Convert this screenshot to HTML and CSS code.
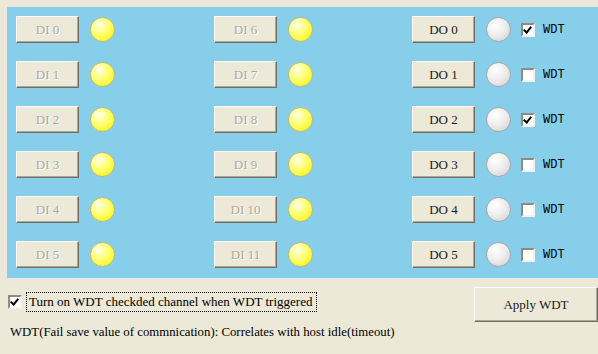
FILE: index.html
```html
<!DOCTYPE html>
<html lang="en">
<head>
  <meta charset="UTF-8">
  <title>DIO WDT</title>
  <link rel="stylesheet" href="styles.css">
</head>
<body>

<div class="panel">
  <div class="col">
    <div class="ch"><span class="btn off">DI 0</span><span class="led yellow"></span></div>
    <div class="ch"><span class="btn off">DI 1</span><span class="led yellow"></span></div>
    <div class="ch"><span class="btn off">DI 2</span><span class="led yellow"></span></div>
    <div class="ch"><span class="btn off">DI 3</span><span class="led yellow"></span></div>
    <div class="ch"><span class="btn off">DI 4</span><span class="led yellow"></span></div>
    <div class="ch"><span class="btn off">DI 5</span><span class="led yellow"></span></div>
  </div>
  <div class="col">
    <div class="ch"><span class="btn off">DI 6</span><span class="led yellow"></span></div>
    <div class="ch"><span class="btn off">DI 7</span><span class="led yellow"></span></div>
    <div class="ch"><span class="btn off">DI 8</span><span class="led yellow"></span></div>
    <div class="ch"><span class="btn off">DI 9</span><span class="led yellow"></span></div>
    <div class="ch"><span class="btn off">DI 10</span><span class="led yellow"></span></div>
    <div class="ch"><span class="btn off">DI 11</span><span class="led yellow"></span></div>
  </div>
  <div class="col">
    <div class="ch"><span class="btn">DO 0</span><span class="led gray"></span><span class="chk on"></span><span class="wdt">WDT</span></div>
    <div class="ch"><span class="btn">DO 1</span><span class="led gray"></span><span class="chk"></span><span class="wdt">WDT</span></div>
    <div class="ch"><span class="btn">DO 2</span><span class="led gray"></span><span class="chk on"></span><span class="wdt">WDT</span></div>
    <div class="ch"><span class="btn">DO 3</span><span class="led gray"></span><span class="chk"></span><span class="wdt">WDT</span></div>
    <div class="ch"><span class="btn">DO 4</span><span class="led gray"></span><span class="chk"></span><span class="wdt">WDT</span></div>
    <div class="ch"><span class="btn">DO 5</span><span class="led gray"></span><span class="chk"></span><span class="wdt">WDT</span></div>
  </div>
</div>

<div class="footer">
  <div class="opt">
    <span class="chk on"></span>
    <span class="focus">Turn on WDT checkded channel when WDT triggered</span>
  </div>
  <span class="btn apply">Apply WDT</span>
</div>
<p class="note">WDT(Fail save value of commnication): Correlates with host idle(timeout)</p>

</body>
</html>
```

FILE: styles.css
```css
body {
  margin: 0;
  background: #ece9d8;
  font-family: "Liberation Serif", serif;
  font-size: 13px;
  color: #000;
  width: 598px;
  height: 354px;
  overflow: hidden;
}
.panel {
  margin: 7px 0 0 7px;
  height: 262px;
  padding: 9px 0 0 9px;
  background: #87ceeb;
  display: grid;
  grid-template-columns: 198px 198px 182px;
  box-sizing: content-box;
}
.col {
  display: flex;
  flex-direction: column;
  gap: 18px;
}
.ch {
  display: flex;
  align-items: center;
  height: 27px;
}
.btn {
  box-sizing: border-box;
  width: 63px;
  height: 27px;
  display: flex;
  align-items: center;
  justify-content: center;
  background: #ece9d8;
  border: 1px solid;
  border-color: #fff #716f64 #716f64 #fff;
  box-shadow: inset -1px -1px #aca899;
  color: #1a1a1a;
}
.btn.off {
  color: #aca899;
  text-shadow: 1px 1px #fff;
}
.led {
  width: 23px;
  height: 23px;
  border-radius: 50%;
  margin-left: 11px;
  border: 1px solid;
}
.led.yellow {
  background: radial-gradient(circle at 35% 30%, #ffffe8 0%, #ffff70 45%, #f8f000 100%);
  border-color: #c4bc6c;
}
.led.gray {
  background: radial-gradient(circle at 35% 30%, #ffffff 0%, #eeeeee 45%, #cfcfcf 100%);
  border-color: #a8a8a8;
}
.chk {
  box-sizing: border-box;
  width: 14px;
  height: 14px;
  background: #fff;
  border: 2px solid;
  border-color: #8f8b7e #f4f2ea #f4f2ea #8f8b7e;
  position: relative;
}
.ch .chk {
  margin-left: 10px;
}
.chk.on::after {
  content: "";
  position: absolute;
  left: 2px;
  top: 0px;
  width: 3px;
  height: 6px;
  border: solid #000;
  border-width: 0 2.5px 2.5px 0;
  transform: rotate(40deg);
}
.wdt {
  margin-left: 8px;
  font-family: "Liberation Mono", monospace;
  font-size: 12px;
}
.footer {
  display: flex;
  justify-content: space-between;
  align-items: flex-start;
  margin-top: 9px;
}
.opt {
  display: flex;
  align-items: center;
  margin: 5px 0 0 8px;
}
.focus {
  margin-left: 4px;
  padding: 1px 4px 1px 2px;
  border: 1px dotted #000;
}
.btn.apply {
  width: 124px;
  height: 35px;
}
.note {
  margin: 3px 0 0 10px;
  font-size: 12.8px;
}
```
